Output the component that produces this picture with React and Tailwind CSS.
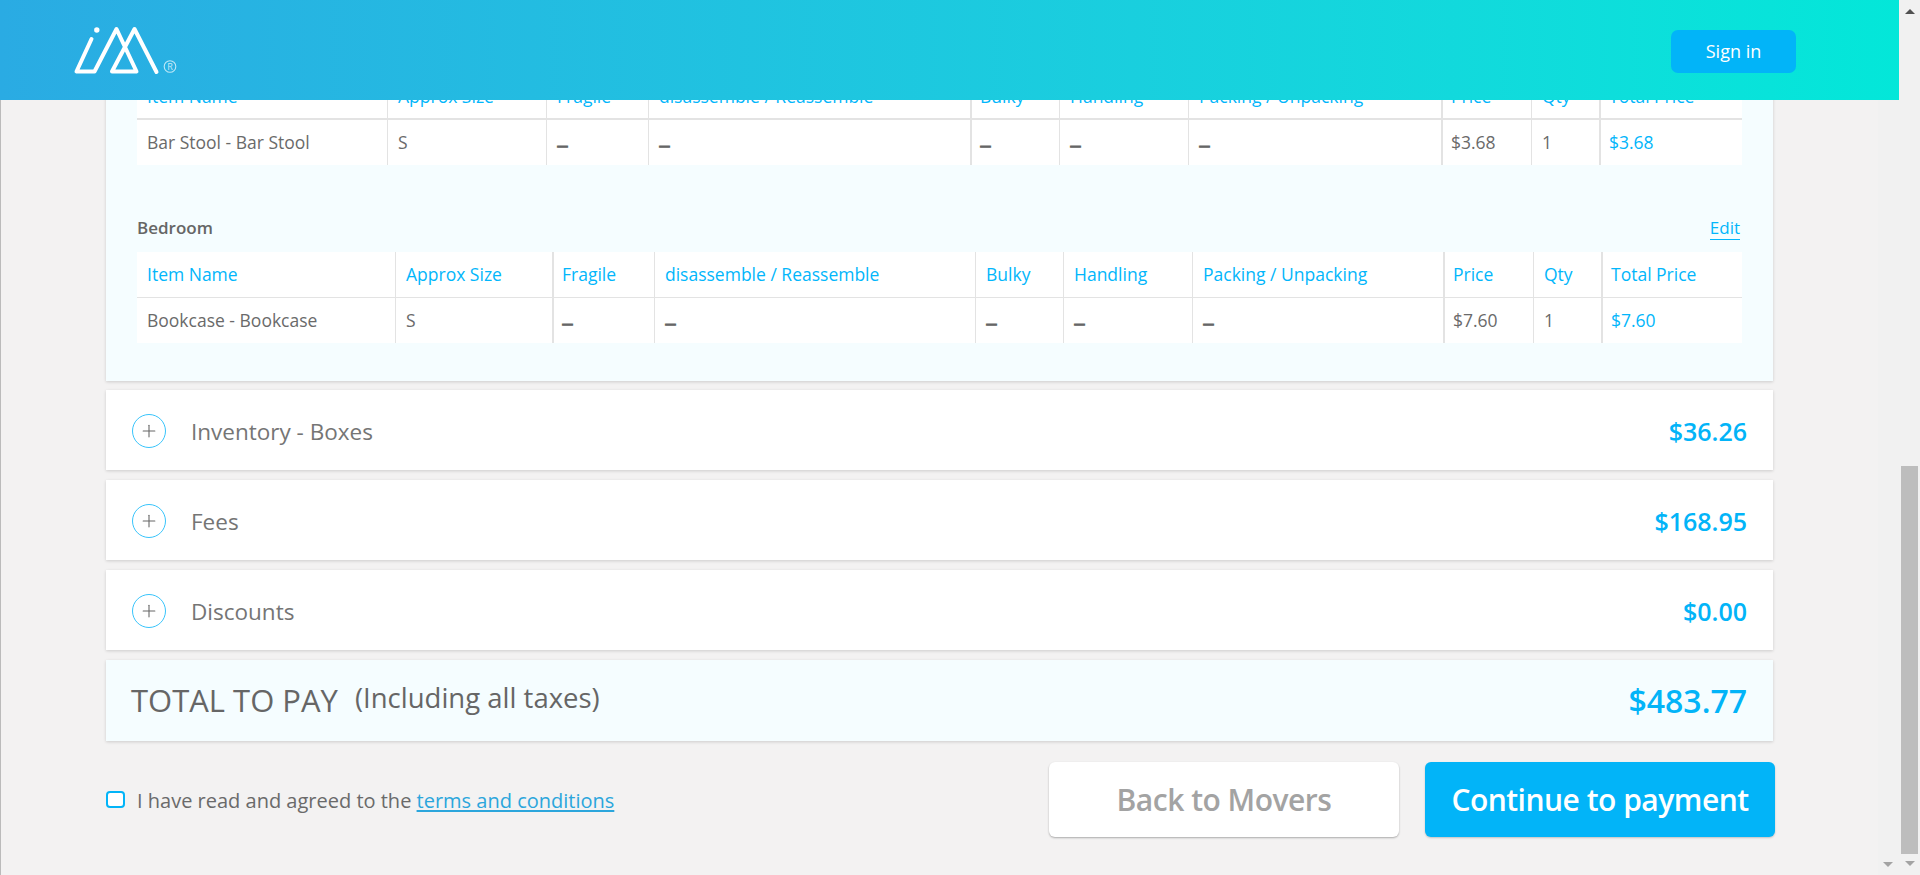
import React from 'react'
import { Plus } from 'lucide-react'

const columns = ['Item Name', 'Approx Size', 'Fragile', 'disassemble / Reassemble', 'Bulky', 'Handling', 'Packing / Unpacking', 'Price', 'Qty', 'Total Price']

const Logo = () => (
  <svg width="120" height="60" viewBox="60 20 120 60" fill="none">
    <circle cx="96.8" cy="30" r="2.7" fill="#fff" />
    <path
      d="M91.5 39 L76.5 71.5 H94.5 L116.5 29 L136.5 71.5 H112 L134.5 29 L156.5 72"
      stroke="#fff"
      strokeWidth="4"
      strokeLinejoin="round"
      strokeLinecap="round"
    />
    <circle cx="170" cy="66.5" r="5.8" stroke="#fff" strokeOpacity="0.7" strokeWidth="1.1" />
    <text x="170" y="70" textAnchor="middle" fontSize="9" fill="#fff" fillOpacity="0.75">R</text>
  </svg>
)

const Header = () => (
  <header className="absolute top-0 left-0 z-10 w-[1899px] h-[100px] flex items-center justify-between pl-[60px] pr-[103px] bg-gradient-to-r from-[#2aabe3] to-[#03e7d9]">
    <Logo />
    <button className="w-[125px] h-[43px] mt-[3px] rounded-[7px] bg-[#02b4f8] text-white text-[18px]">Sign in</button>
  </header>
)

const Cell = ({ className = '', thick, first, children }) => (
  <div
    className={`flex items-center overflow-hidden whitespace-nowrap ${first ? 'pl-[10px]' : thick ? 'pl-[8px]' : 'pl-[10px]'} ${thick ? 'border-l-2' : first ? '' : 'border-l'} border-[#e3e3e3] ${className}`}
  >
    {children}
  </div>
)

const Dash = () => <span className="text-[11px] font-bold text-[#666] mt-[5px] [-webkit-text-stroke:1px_#666]">—</span>

const ItemTable = ({ gridClass, thick, name, price, headBorder }) => {
  const values = [name, 'S', <Dash />, <Dash />, <Dash />, <Dash />, <Dash />, price, '1', price]
  return (
    <div className="w-[1605px] bg-white">
      <div className={`grid ${gridClass} h-[46px] ${headBorder} border-[#e3e3e3]`}>
        {columns.map((c, i) => (
          <Cell key={c} first={i === 0} thick={thick.includes(i)} className="text-[#02b6fb] text-[17.5px]">
            {c}
          </Cell>
        ))}
      </div>
      <div className={`grid ${gridClass} h-[45px]`}>
        {values.map((v, i) => (
          <Cell key={i} first={i === 0} thick={thick.includes(i)} className={i === 9 ? 'text-[#02b6fb] text-[17.5px]' : 'text-[#6a6a6a] text-[17.5px]'}>
            {v}
          </Cell>
        ))}
      </div>
    </div>
  )
}

const CollapsedRow = ({ label, amount }) => (
  <div className="h-[80px] flex items-center justify-between bg-white pl-[26px] pr-[26px] shadow-[0_1px_3px_rgba(0,0,0,0.16)]">
    <div className="flex items-center">
      <span className="w-[34px] h-[34px] mt-[1px] flex items-center justify-center rounded-full border-[1.5px] border-[#38c4fb] text-[#666]">
        <Plus size={20} strokeWidth={1.3} />
      </span>
      <span className="ml-[25px] mt-[3px] text-[22.5px] text-[#757575]">{label}</span>
    </div>
    <span className="mt-[3px] text-[25px] font-semibold text-[#02b4f8]">{amount}</span>
  </div>
)

const Scrollbars = () => (
  <>
    <div className="w-[21px] h-full relative bg-[#f1f1f1]">
      <span className="absolute left-[5px] bottom-[8px] w-0 h-0 border-x-[5px] border-x-transparent border-t-[5px] border-t-[#a3a3a3]" />
    </div>
    <div className="w-[21px] h-full flex flex-col items-center bg-[#f1f1f1]">
      <span className="mt-[9px] w-0 h-0 border-x-[5px] border-x-transparent border-b-[5px] border-b-[#505050]" />
      <div className="mt-[452px] w-[17px] h-[388px] bg-[#bdbdbd]" />
      <span className="mt-[7px] w-0 h-0 border-x-[5px] border-x-transparent border-t-[5px] border-t-[#a3a3a3]" />
    </div>
  </>
)

export default function App() {
  return (
    <div className="relative flex h-screen w-full overflow-hidden bg-[#f3f2f2] font-['Open_Sans',sans-serif]">
      <Header />

      <main className="flex-1 min-w-0 border-l border-[#bbbbbb] pl-[105px]">
        <div className="w-[1667px]">
          {/* Expanded inventory card, scrolled under the header */}
          <section className="bg-[#f5fdff] pt-[74px] pl-[31px] pb-[38px] shadow-[0_1px_3px_rgba(0,0,0,0.16)]">
            <ItemTable
              gridClass="grid-cols-[250px_159px_102px_322px_89px_129px_253px_90px_68px_143px]"
              thick={[4, 7, 9]}
              name="Bar Stool - Bar Stool"
              price="$3.68"
              headBorder="border-b-2"
            />
            <div className="flex items-end justify-between w-[1605px] h-[75px] pr-[2px]">
              <span className="text-[17px] font-semibold text-[#666]">Bedroom</span>
              <a className="text-[17px] leading-[22px] text-[#02b6fb] border-b border-[#02b6fb]">Edit</a>
            </div>
            <div className="mt-[12px]">
              <ItemTable
                gridClass="grid-cols-[258px_157px_102px_321px_88px_129px_251px_90px_68px_142px]"
                thick={[2, 7, 9]}
                name="Bookcase - Bookcase"
                price="$7.60"
                headBorder="border-b"
              />
            </div>
          </section>

          <div className="mt-[9px] flex flex-col gap-[10px]">
            <CollapsedRow label="Inventory - Boxes" amount="$36.26" />
            <CollapsedRow label="Fees" amount="$168.95" />
            <CollapsedRow label="Discounts" amount="$0.00" />
            <div className="h-[81px] flex items-center justify-between bg-[#f5fdff] pl-[25px] pr-[26px] shadow-[0_1px_3px_rgba(0,0,0,0.16)]">
              <div className="flex items-center text-[#666]">
                <span className="text-[31px]">TOTAL TO PAY</span>
                <span className="ml-[17px] -mt-[5px] text-[27.5px]">(Including all taxes)</span>
              </div>
              <span className="text-[32px] font-semibold text-[#02b4f8]">$483.77</span>
            </div>
          </div>

          <div className="mt-[21px] flex items-center w-[1669px]">
            <span className="w-[19px] h-[17px] rounded-[4px] border-2 border-[#02b4f8] bg-white" />
            <span className="ml-[12px] mt-[3px] text-[20px] text-[#6a6a6a]">
              I have read and agreed to the{' '}
              <a className="text-[#2ba6dc] underline underline-offset-2">terms and conditions</a>
            </span>
            <button className="ml-auto w-[350px] h-[75px] rounded-[6px] bg-white text-[30px] tracking-[-0.5px] font-semibold text-[#a3a3a3] shadow-[0_1px_2px_rgba(0,0,0,0.3)]">
              Back to Movers
            </button>
            <button className="ml-[26px] w-[350px] h-[75px] rounded-[6px] bg-[#02b4f8] text-[30px] tracking-[-0.5px] font-semibold text-white shadow-[0_1px_2px_rgba(0,0,0,0.2)]">
              Continue to payment
            </button>
          </div>
        </div>
      </main>

      <Scrollbars />
    </div>
  )
}
